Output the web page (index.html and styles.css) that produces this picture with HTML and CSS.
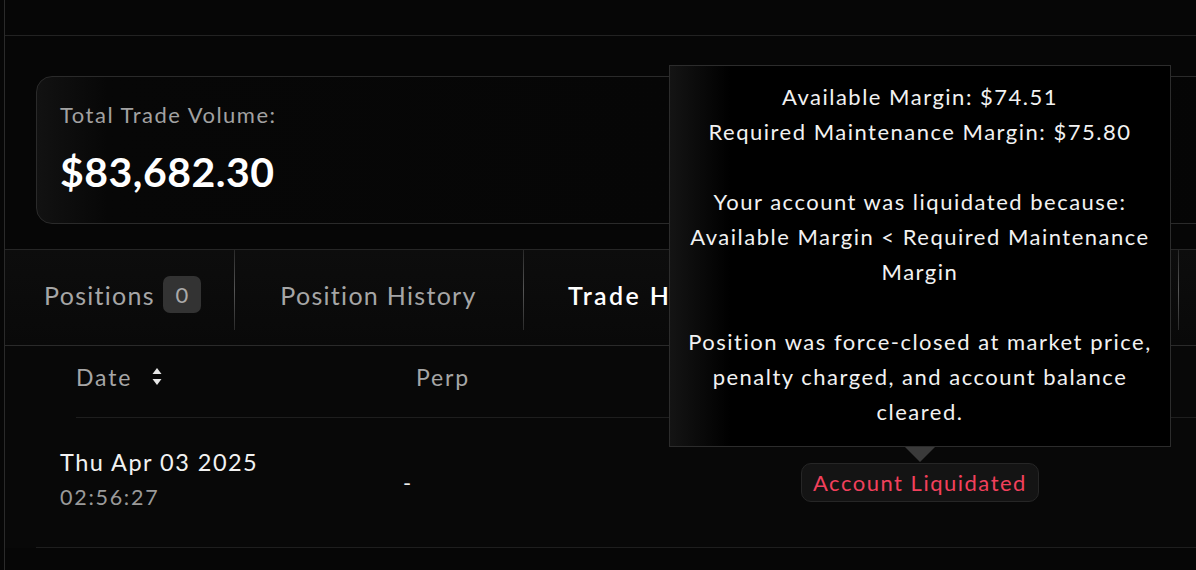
FILE: index.html
```html
<!DOCTYPE html>
<html lang="en">
<head>
<meta charset="utf-8">
<title>Trade History</title>
<link rel="stylesheet" href="styles.css">
</head>
<body>
<div class="frame">
  <div class="topbar"></div>
  <section class="summary">
    <div class="card">
      <div class="card-label">Total Trade Volume:</div>
      <div class="card-value">$83,682.30</div>
    </div>
  </section>
  <nav class="tabs">
    <div class="tab first"><span>Positions</span><span class="count">0</span></div>
    <div class="tab">Position History</div>
    <div class="tab active">Trade History</div>
    <div class="tab"></div>
    <div class="tab"></div>
  </nav>
  <div class="table">
    <div class="thead">
      <div class="th">Date
        <svg class="sort" width="10" height="18" viewBox="0 0 10 18"><path d="M5 0 L9.5 6 L0.5 6 Z" fill="#e6e6e6"/><path d="M0.5 11 L9.5 11 L5 17 Z" fill="#e6e6e6"/></svg>
      </div>
      <div class="th">Perp</div>
      <div class="th"></div>
    </div>
    <div class="row">
      <div class="cell date">
        <div class="day">Thu Apr 03 2025</div>
        <div class="time">02:56:27</div>
      </div>
      <div class="cell">-</div>
      <div class="cell">
        <div class="status">Account Liquidated
          <div class="tooltip">
            <p>Available Margin: $74.51<br>Required Maintenance Margin: $75.80</p>
            <p>Your account was liquidated because:<br>Available Margin &lt; Required Maintenance Margin</p>
            <p>Position was force-closed at market price, penalty charged, and account balance cleared.</p>
          </div>
        </div>
      </div>
    </div>
  </div>
</div>
</body>
</html>
```

FILE: styles.css
```css
* { box-sizing: border-box; }
html, body {
  margin: 0;
  background: #060606;
  overflow: hidden;
}
body {
  font-family: "Lato", "Noto Sans", sans-serif;
  letter-spacing: 1px;
  color: #fff;
  width: 1196px;
  height: 570px;
}
.frame {
  margin-left: 4px;
  border-left: 1px solid #2a2a2a;
  height: 570px;
  overflow: hidden;
}
.topbar {
  height: 36px;
  border-bottom: 1px solid #222;
}
.summary {
  padding: 40px 0 25px 31px;
}
.card {
  height: 148px;
  margin-right: -60px;
  border: 1px solid #2a2a2a;
  border-radius: 16px;
  background: linear-gradient(90deg, #121212 0px, #070707 70px, #050505 100%);
  padding: 23px 23px;
}
.card-label {
  font-size: 22px;
  line-height: 30px;
  letter-spacing: 1.5px;
  color: #a2a2a2;
}
.card-value {
  margin-top: 18px;
  font-size: 41px;
  line-height: 48px;
  font-weight: 700;
  letter-spacing: 0.5px;
  color: #fff;
}
.tabs {
  display: grid;
  grid-template-columns: 229px 289px 300px 355px 1fr;
  height: 97px;
  border-top: 1px solid #262626;
  border-bottom: 1px solid #2a2a2a;
  background: linear-gradient(180deg, #0d0d0d, #090909);
}
.tab {
  display: flex;
  align-items: center;
  justify-content: center;
  gap: 8px;
  font-size: 25px;
  letter-spacing: 1.3px;
  color: #a6a6a6;
  position: relative;
  white-space: nowrap;
  padding-bottom: 6px;
}
.tab.first { justify-content: flex-start; padding-left: 39px; }
.tab.active {
  justify-content: flex-start;
  padding-left: 45px;
  color: #fff;
  font-weight: 600;
  letter-spacing: 2.4px;
}
.tab + .tab::before {
  content: "";
  position: absolute;
  left: 0;
  top: 0;
  height: 80px;
  width: 1px;
  background: linear-gradient(180deg, #2a2a2a, #555 50%, #2a2a2a);
}
.count {
  display: inline-flex;
  align-items: center;
  justify-content: center;
  width: 38px;
  height: 37px;
  border-radius: 7px;
  background: #333;
  color: #aaa;
  font-size: 22px;
  letter-spacing: 0;
}
.table {
  background: #080808;
  padding-left: 31px;
}
.thead {
  display: grid;
  grid-template-columns: 340px 385px 1fr;
  height: 72px;
  margin-left: 40px;
  border-bottom: 1px solid #1e1e1e;
  align-items: center;
  padding-bottom: 10px;
}
.th {
  font-size: 23px;
  letter-spacing: 1.84px;
  color: #a6a6a6;
  display: flex;
  align-items: center;
  gap: 20px;
}
.sort { display: block; }
.row {
  display: grid;
  grid-template-columns: 343px 398px 1fr;
  height: 130px;
  padding-left: 24px;
  border-bottom: 1px solid #1e1e1e;
  align-items: center;
}
.date { padding-bottom: 4px; }
.day {
  font-size: 23.5px;
  line-height: 33px;
  letter-spacing: 1.48px;
  color: #f2f2f2;
}
.time {
  font-size: 21.5px;
  line-height: 37px;
  letter-spacing: 1.72px;
  color: #9a9a9a;
}
.cell { font-size: 22px; color: #eee; }
.status {
  position: relative;
  display: inline-block;
  padding: 0 11px;
  height: 39px;
  line-height: 37px;
  border: 1px solid #262626;
  border-radius: 10px;
  background: #141414;
  color: #f2405c;
  font-size: 22px;
  letter-spacing: 1.5px;
  white-space: nowrap;
}
.tooltip {
  position: absolute;
  left: 50%;
  bottom: calc(100% + 17px);
  transform: translateX(-50%);
  width: 502px;
  padding: 13px 18px 17px;
  border: 1px solid #2c2c2c;
  background: linear-gradient(90deg, #141414 0px, #000 60px, #000 100%);
  color: #f2f2f2;
  text-align: center;
  font-size: 22px;
  line-height: 35px;
  letter-spacing: 1.5px;
  white-space: normal;
}
.tooltip p { margin: 0; }
.tooltip p + p { margin-top: 35px; }
.tooltip::after {
  content: "";
  position: absolute;
  left: 50%;
  top: 100%;
  margin-left: -15px;
  margin-top: 1px;
  border-left: 15px solid transparent;
  border-right: 15px solid transparent;
  border-top: 15px solid #3a3a3a;
}
```
